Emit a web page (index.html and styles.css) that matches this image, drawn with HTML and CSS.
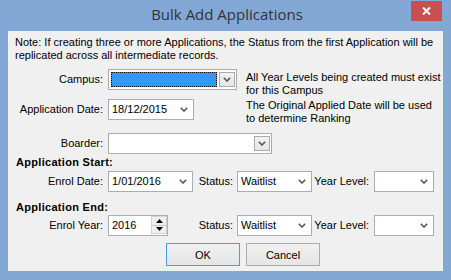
FILE: index.html
```html
<!DOCTYPE html>
<html>
<head>
<meta charset="utf-8">
<title>Bulk Add Applications</title>
<link rel="stylesheet" href="styles.css">
</head>
<body>
<div class="window">
  <div class="titlebar">
    <div></div>
    <div class="title">Bulk Add Applications</div>
    <div class="close">
      <svg width="9" height="8" viewBox="0 0 9 8"><path d="M1 0.5 L8 7.5 M8 0.5 L1 7.5" stroke="#fff" stroke-width="2" fill="none"/></svg>
    </div>
  </div>
  <div class="client">
    <p class="note">Note: If creating three or more Applications, the Status from the first Application will be<br>replicated across all intermediate records.</p>

    <div class="row row-campus">
      <label class="lbl">Campus:</label>
      <div class="fieldwrap">
        <div class="box combo combo-campus">
          <div class="val sel"></div>
          <div class="dd"><svg width="8" height="5" viewBox="0 0 8 5"><path d="M0.8 0.8 L4 4 L7.2 0.8" stroke="#555" stroke-width="1.6" fill="none"/></svg></div>
        </div>
      </div>
      <div class="hint hint1">All Year Levels being created must exist<br>for this Campus</div>
    </div>

    <div class="row row-date">
      <label class="lbl">Application Date:</label>
      <div class="fieldwrap">
        <div class="box picker w-date"><span class="txt">18/12/2015</span><svg class="chev" width="8" height="5" viewBox="0 0 8 5"><path d="M0.8 0.8 L4 4 L7.2 0.8" stroke="#555" stroke-width="1.6" fill="none"/></svg></div>
      </div>
      <div class="hint hint2">The Original Applied Date will be used<br>to determine Ranking</div>
    </div>

    <div class="row row-boarder">
      <label class="lbl">Boarder:</label>
      <div class="box combo combo-boarder">
        <div class="val"></div>
        <div class="dd"><svg width="8" height="5" viewBox="0 0 8 5"><path d="M0.8 0.8 L4 4 L7.2 0.8" stroke="#555" stroke-width="1.6" fill="none"/></svg></div>
      </div>
    </div>

    <div class="section sec-start">Application Start:</div>
    <div class="row row-enrol1">
      <label class="lbl">Enrol Date:</label>
      <div class="cell">
        <div class="box picker w-enrol"><span class="txt">1/01/2016</span><svg class="chev" width="8" height="5" viewBox="0 0 8 5"><path d="M0.8 0.8 L4 4 L7.2 0.8" stroke="#555" stroke-width="1.6" fill="none"/></svg></div>
      </div>
      <label class="lbl-status">Status:</label>
      <div class="box picker w-status"><span class="txt">Waitlist</span><svg class="chev" width="8" height="5" viewBox="0 0 8 5"><path d="M0.8 0.8 L4 4 L7.2 0.8" stroke="#555" stroke-width="1.6" fill="none"/></svg></div>
      <label class="lbl-yl">Year Level:</label>
      <div class="box picker w-yl"><span class="txt"></span><svg class="chev" width="8" height="5" viewBox="0 0 8 5"><path d="M0.8 0.8 L4 4 L7.2 0.8" stroke="#555" stroke-width="1.6" fill="none"/></svg></div>
    </div>

    <div class="section sec-end">Application End:</div>
    <div class="row row-enrol2">
      <label class="lbl">Enrol Year:</label>
      <div class="cell">
        <div class="box spin">
          <span class="txt">2016</span>
          <div class="spinbtns">
            <div class="sb"><svg width="7" height="4" viewBox="0 0 7 4"><path d="M0 4 L3.5 0 L7 4 Z" fill="#000"/></svg></div>
            <div class="sb"><svg width="7" height="4" viewBox="0 0 7 4"><path d="M0 0 L3.5 4 L7 0 Z" fill="#000"/></svg></div>
          </div>
        </div>
      </div>
      <label class="lbl-status">Status:</label>
      <div class="box picker w-status"><span class="txt">Waitlist</span><svg class="chev" width="8" height="5" viewBox="0 0 8 5"><path d="M0.8 0.8 L4 4 L7.2 0.8" stroke="#555" stroke-width="1.6" fill="none"/></svg></div>
      <label class="lbl-yl">Year Level:</label>
      <div class="box picker w-yl"><span class="txt"></span><svg class="chev" width="8" height="5" viewBox="0 0 8 5"><path d="M0.8 0.8 L4 4 L7.2 0.8" stroke="#555" stroke-width="1.6" fill="none"/></svg></div>
    </div>

    <div class="buttons">
      <button class="btn btn-default">OK</button>
      <button class="btn">Cancel</button>
    </div>
  </div>
</div>
</body>
</html>
```

FILE: styles.css
```css
html, body {
  margin: 0;
  padding: 0;
  background: #84a8d6;
}

body {
  font-family: "Liberation Sans", Arial, sans-serif;
  font-size: 11px;
}

.window {
  width: 451px;
  height: 280px;
  background: #84a8d6;
  display: flex;
  flex-direction: column;
}

.titlebar {
  height: 31px;
  flex: none;
  display: grid;
  grid-template-columns: 1fr auto 1fr;
}

.title {
  font-family: "Open Sans", "Noto Sans", sans-serif;
  font-size: 15px;
  line-height: 28px;
  color: #333;
  padding-left: 3px;
  white-space: nowrap;
}

.close {
  justify-self: end;
  align-self: start;
  margin: 1px 9px 0 0;
  width: 31px;
  height: 20px;
  background: #c75050;
  display: flex;
  align-items: center;
  justify-content: center;
}

.client {
  flex: 1;
  margin: 0 8px 9px;
  background: #f0f0f0;
  padding: 5px 0 0 7px;
  color: #000;
  line-height: 13px;
}

.note {
  margin: 0;
  white-space: nowrap;
}

.row {
  display: flex;
  align-items: flex-start;
}

.lbl {
  flex: none;
  width: 88px;
  margin-right: 5px;
  text-align: right;
  line-height: 21px;
  white-space: nowrap;
}

.fieldwrap {
  flex: none;
  width: 129px;
}

.cell {
  flex: none;
  width: 85px;
}

.hint {
  margin-left: 9px;
  white-space: nowrap;
}

.hint1 { margin-top: 2px; }
.hint2 { margin-top: 0; }

.row-campus { margin-top: 7px; }
.row-date { margin-top: 2px; }
.row-boarder { margin-top: 8px; }

.section {
  font-weight: bold;
  margin-left: 1px;
  letter-spacing: 0.3px;
}

.sec-start { margin-top: 2px; }
.row-enrol1 { margin-top: 2px; }
.sec-end { margin-top: 9px; }
.row-enrol2 { margin-top: 1px; }

.lbl-status {
  flex: none;
  width: 40px;
  margin-right: 4px;
  text-align: right;
  line-height: 21px;
  white-space: nowrap;
}

.lbl-yl {
  flex: none;
  width: 57px;
  margin-right: 5px;
  text-align: right;
  line-height: 21px;
  white-space: nowrap;
}

.box {
  box-sizing: border-box;
  height: 21px;
  border: 1px solid #abadb3;
  background: #fff;
  display: flex;
  align-items: center;
  flex: none;
}

.picker .txt,
.spin .txt {
  flex: 1;
  padding-left: 3px;
  white-space: nowrap;
}

.picker .chev {
  margin-right: 5px;
}

.w-date { width: 86px; }
.w-enrol { width: 85px; }
.w-status { width: 75px; }
.w-yl { width: 60px; }

.combo {
  border-color: #acacac;
  padding: 2px 1px 2px 2px;
  align-items: stretch;
}

.combo-campus { width: 129px; }
.combo-boarder { width: 164px; }

.combo .val {
  flex: 1;
  margin-right: 2px;
}

.combo .val.sel {
  background: #3399ff;
  box-shadow: inset 0 0 0 1px #c8641e;
  outline: 1px dotted #111;
  outline-offset: -1px;
}

.dd {
  flex: none;
  width: 16px;
  box-sizing: border-box;
  border: 1px solid #acacac;
  background: linear-gradient(#f2f2f2, #e5e5e5);
  display: flex;
  align-items: center;
  justify-content: center;
}

.spin {
  width: 60px;
  align-items: flex-start;
}

.spin .txt {
  line-height: 19px;
}

.spinbtns {
  flex: none;
  width: 16px;
  height: 18px;
  box-sizing: border-box;
  border: 1px solid #d4d4d4;
  background: #efefef;
  display: flex;
  flex-direction: column;
}

.sb {
  flex: 1;
  display: flex;
  align-items: center;
  justify-content: center;
}

.sb + .sb {
  border-top: 1px solid #c8c8c8;
}

.buttons {
  margin: 7px 0 0 151px;
  display: flex;
  gap: 6px;
}

.btn {
  width: 74px;
  height: 23px;
  box-sizing: border-box;
  border: 1px solid #acacac;
  background: linear-gradient(#f0f0f0, #e5e5e5);
  font-family: inherit;
  font-size: 11px;
  color: #000;
  padding: 0;
}

.btn-default {
  border-color: #4c9be6;
}
```
